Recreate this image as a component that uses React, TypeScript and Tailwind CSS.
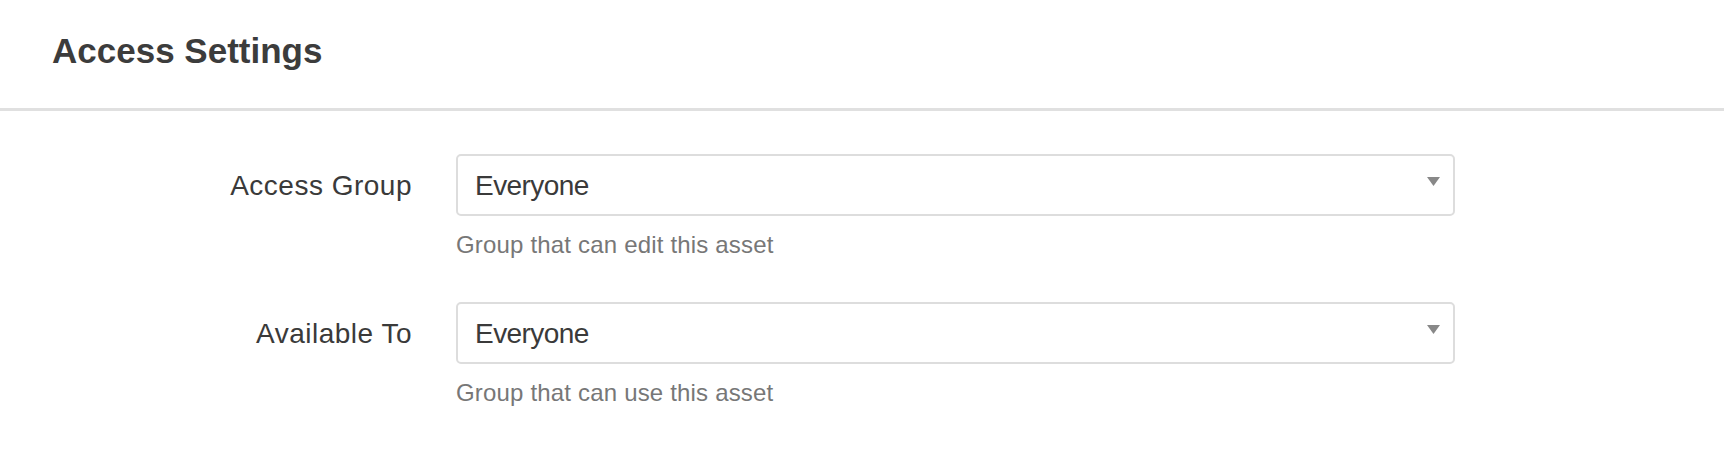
import React from "react";

const font = { fontFamily: '"Liberation Sans", Arial, Helvetica, sans-serif' };

function Field({ label, value, help }: { label: string; value: string; help: string }) {
  return (
    <div className="flex items-start">
      <div className="h-[62px] w-[412px] shrink-0 text-right text-[28px] leading-[64px] tracking-[0.5px] text-[#3a3a3a]">
        {label}
      </div>
      <div className="ml-[44px] w-[999px] shrink-0">
        <div className="relative h-[62px] rounded-[5px] border-2 border-[#dddddd] bg-white">
          <div className="h-[58px] pl-[17px] text-[28px] leading-[60px] tracking-[-0.55px] text-[#3a3a3a]">{value}</div>
          <svg
            className="absolute right-[13px] top-[21px]"
            width="13"
            height="9"
            viewBox="0 0 13 9"
          >
            <polygon points="0,0 13,0 6.5,9" fill="#888888" />
          </svg>
        </div>
        <div className="mt-[12px] text-[24px] leading-[34px] tracking-[0.18px] text-[#777777]">{help}</div>
      </div>
    </div>
  );
}

export default function App() {
  return (
    <div className="min-h-[462px] w-full bg-white" style={font}>
      <div className="h-[111px] border-b-[3px] border-[#e0e0e0] pl-[52px] pt-[33px]">
        <h1 className="text-[35px] font-bold leading-[36px] text-[#3c3c3c]">Access Settings</h1>
      </div>
      <div className="flex flex-col gap-[40px] pt-[43px]">
        <Field label="Access Group" value="Everyone" help="Group that can edit this asset" />
        <Field label="Available To" value="Everyone" help="Group that can use this asset" />
      </div>
    </div>
  );
}
